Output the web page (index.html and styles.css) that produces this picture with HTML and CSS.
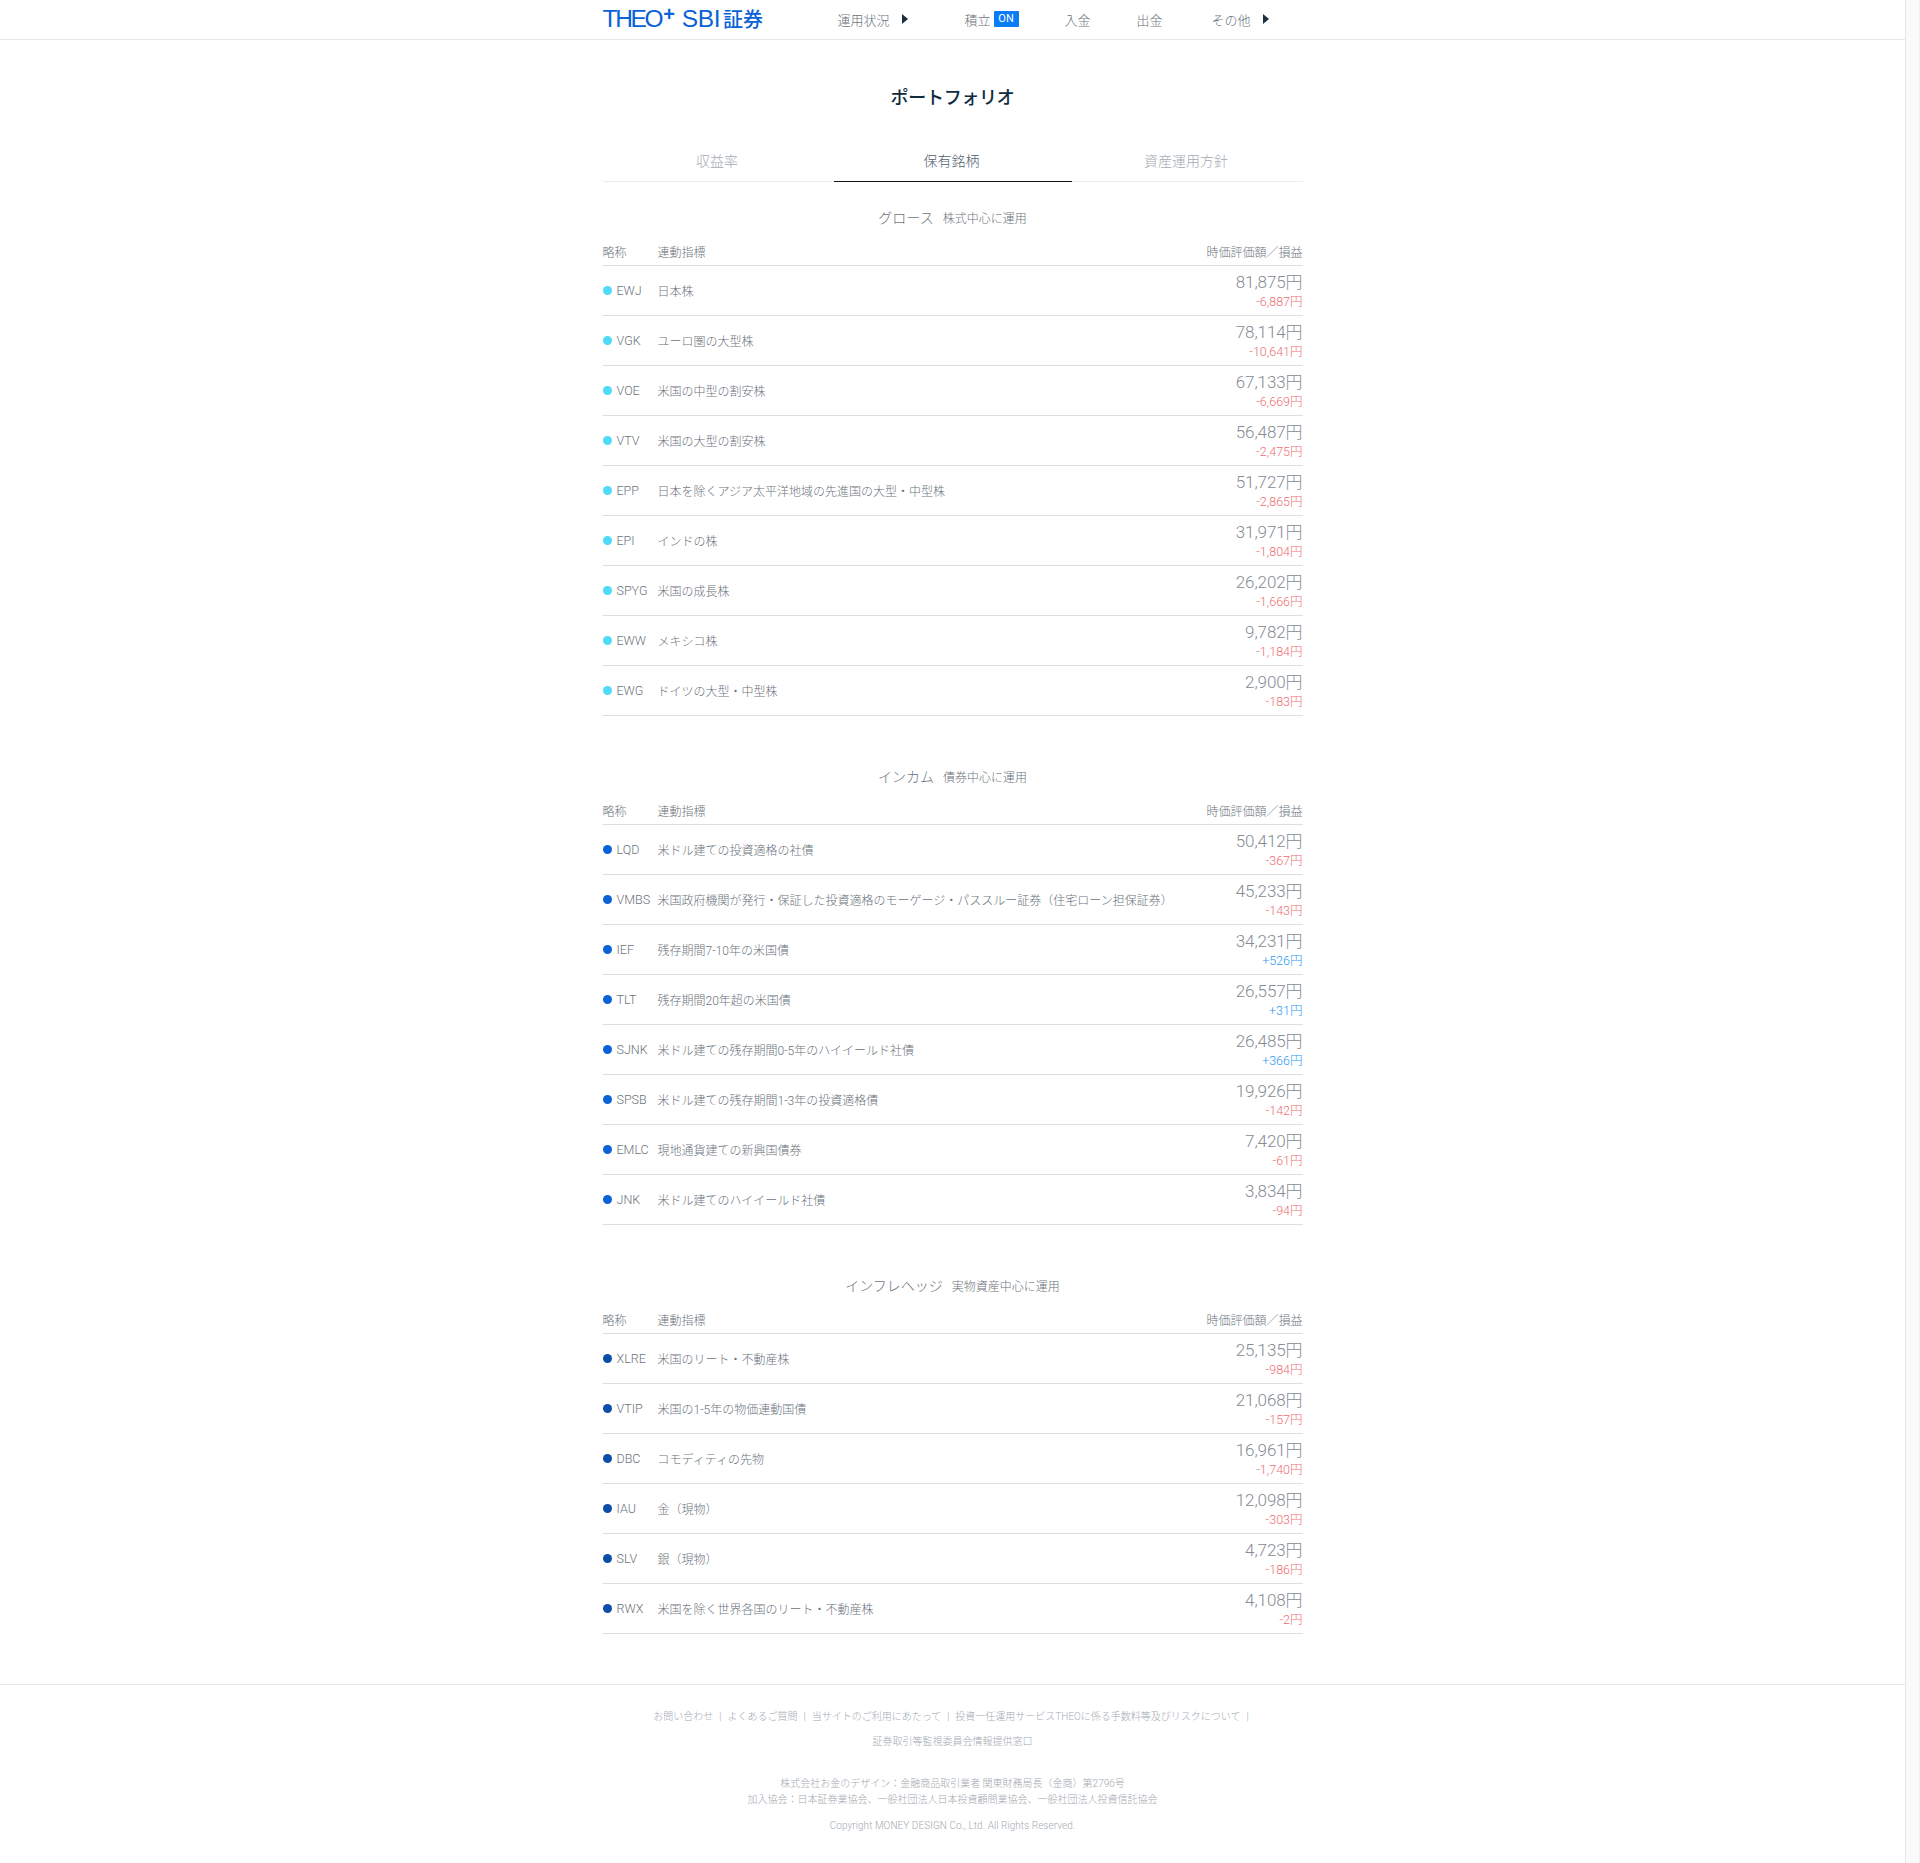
FILE: index.html
```html
<!DOCTYPE html>
<html lang="ja">
<head>
  <meta charset="UTF-8" />
  <title>ポートフォリオ</title>
  <link rel="stylesheet" href="styles.css">
</head>
<body>
<div class="page">
  <header class="site-header">
    <div class="site-header-inner">
      <div class="logo">THEO<sup>+</sup><span class="logo-sbi">SBI</span><span class="logo-ja">証券</span></div>
      <nav class="nav">
        <a class="nav-item nav-status">運用状況<i class="arrow"></i></a>
        <a class="nav-item nav-save">積立<span class="badge">ON</span></a>
        <a class="nav-item nav-in">入金</a>
        <a class="nav-item nav-out">出金</a>
        <a class="nav-item nav-other">その他<i class="arrow"></i></a>
      </nav>
    </div>
  </header>

  <main class="content">
    <h1 class="page-title">ポートフォリオ</h1>

    <div class="tabs">
      <a class="tab">収益率</a>
      <a class="tab active">保有銘柄</a>
      <a class="tab">資産運用方針</a>
    </div>

    <section class="fund growth">
      <h2 class="fund-title">グロース<small>株式中心に運用</small></h2>
      <div class="fund-head"><span class="col-code">略称</span><span class="col-name">連動指標</span><span class="col-value">時価評価額／損益</span></div>
      <div class="row"><i class="dot"></i><span class="col-code">EWJ</span><span class="col-name">日本株</span><div class="col-value"><b>81,875円</b><em class="minus">-6,887円</em></div></div>
      <div class="row"><i class="dot"></i><span class="col-code">VGK</span><span class="col-name">ユーロ圏の大型株</span><div class="col-value"><b>78,114円</b><em class="minus">-10,641円</em></div></div>
      <div class="row"><i class="dot"></i><span class="col-code">VOE</span><span class="col-name">米国の中型の割安株</span><div class="col-value"><b>67,133円</b><em class="minus">-6,669円</em></div></div>
      <div class="row"><i class="dot"></i><span class="col-code">VTV</span><span class="col-name">米国の大型の割安株</span><div class="col-value"><b>56,487円</b><em class="minus">-2,475円</em></div></div>
      <div class="row"><i class="dot"></i><span class="col-code">EPP</span><span class="col-name">日本を除くアジア太平洋地域の先進国の大型・中型株</span><div class="col-value"><b>51,727円</b><em class="minus">-2,865円</em></div></div>
      <div class="row"><i class="dot"></i><span class="col-code">EPI</span><span class="col-name">インドの株</span><div class="col-value"><b>31,971円</b><em class="minus">-1,804円</em></div></div>
      <div class="row"><i class="dot"></i><span class="col-code">SPYG</span><span class="col-name">米国の成長株</span><div class="col-value"><b>26,202円</b><em class="minus">-1,666円</em></div></div>
      <div class="row"><i class="dot"></i><span class="col-code">EWW</span><span class="col-name">メキシコ株</span><div class="col-value"><b>9,782円</b><em class="minus">-1,184円</em></div></div>
      <div class="row"><i class="dot"></i><span class="col-code">EWG</span><span class="col-name">ドイツの大型・中型株</span><div class="col-value"><b>2,900円</b><em class="minus">-183円</em></div></div>
    </section>

    <section class="fund income">
      <h2 class="fund-title">インカム<small>債券中心に運用</small></h2>
      <div class="fund-head"><span class="col-code">略称</span><span class="col-name">連動指標</span><span class="col-value">時価評価額／損益</span></div>
      <div class="row"><i class="dot"></i><span class="col-code">LQD</span><span class="col-name">米ドル建ての投資適格の社債</span><div class="col-value"><b>50,412円</b><em class="minus">-367円</em></div></div>
      <div class="row"><i class="dot"></i><span class="col-code">VMBS</span><span class="col-name">米国政府機関が発行・保証した投資適格のモーゲージ・パススルー証券（住宅ローン担保証券）</span><div class="col-value"><b>45,233円</b><em class="minus">-143円</em></div></div>
      <div class="row"><i class="dot"></i><span class="col-code">IEF</span><span class="col-name">残存期間7-10年の米国債</span><div class="col-value"><b>34,231円</b><em class="plus">+526円</em></div></div>
      <div class="row"><i class="dot"></i><span class="col-code">TLT</span><span class="col-name">残存期間20年超の米国債</span><div class="col-value"><b>26,557円</b><em class="plus">+31円</em></div></div>
      <div class="row"><i class="dot"></i><span class="col-code">SJNK</span><span class="col-name">米ドル建ての残存期間0-5年のハイイールド社債</span><div class="col-value"><b>26,485円</b><em class="plus">+366円</em></div></div>
      <div class="row"><i class="dot"></i><span class="col-code">SPSB</span><span class="col-name">米ドル建ての残存期間1-3年の投資適格債</span><div class="col-value"><b>19,926円</b><em class="minus">-142円</em></div></div>
      <div class="row"><i class="dot"></i><span class="col-code">EMLC</span><span class="col-name">現地通貨建ての新興国債券</span><div class="col-value"><b>7,420円</b><em class="minus">-61円</em></div></div>
      <div class="row"><i class="dot"></i><span class="col-code">JNK</span><span class="col-name">米ドル建てのハイイールド社債</span><div class="col-value"><b>3,834円</b><em class="minus">-94円</em></div></div>
    </section>

    <section class="fund hedge">
      <h2 class="fund-title">インフレヘッジ<small>実物資産中心に運用</small></h2>
      <div class="fund-head"><span class="col-code">略称</span><span class="col-name">連動指標</span><span class="col-value">時価評価額／損益</span></div>
      <div class="row"><i class="dot"></i><span class="col-code">XLRE</span><span class="col-name">米国のリート・不動産株</span><div class="col-value"><b>25,135円</b><em class="minus">-984円</em></div></div>
      <div class="row"><i class="dot"></i><span class="col-code">VTIP</span><span class="col-name">米国の1-5年の物価連動国債</span><div class="col-value"><b>21,068円</b><em class="minus">-157円</em></div></div>
      <div class="row"><i class="dot"></i><span class="col-code">DBC</span><span class="col-name">コモディティの先物</span><div class="col-value"><b>16,961円</b><em class="minus">-1,740円</em></div></div>
      <div class="row"><i class="dot"></i><span class="col-code">IAU</span><span class="col-name">金（現物）</span><div class="col-value"><b>12,098円</b><em class="minus">-303円</em></div></div>
      <div class="row"><i class="dot"></i><span class="col-code">SLV</span><span class="col-name">銀（現物）</span><div class="col-value"><b>4,723円</b><em class="minus">-186円</em></div></div>
      <div class="row"><i class="dot"></i><span class="col-code">RWX</span><span class="col-name">米国を除く世界各国のリート・不動産株</span><div class="col-value"><b>4,108円</b><em class="minus">-2円</em></div></div>
    </section>
  </main>

  <footer class="site-footer">
    <ul class="footer-links">
      <li>お問い合わせ</li>
      <li>よくあるご質問</li>
      <li>当サイトのご利用にあたって</li>
      <li>投資一任運用サービスTHEOに係る手数料等及びリスクについて</li>
    </ul>
    <p class="footer-window">証券取引等監視委員会情報提供窓口</p>
    <p class="footer-company">株式会社お金のデザイン：金融商品取引業者 関東財務局長（金商）第2796号<br>加入協会：日本証券業協会、一般社団法人日本投資顧問業協会、一般社団法人投資信託協会</p>
    <p class="footer-copy">Copyright MONEY DESIGN Co., Ltd. All Rights Reserved.</p>
  </footer>
</div>
<div class="scrollbar"></div>
</body>
</html>
```

FILE: styles.css
```css
:root {
  --text: #6b737c;
  --muted: #a4aab2;
  --navy: #0f2b40;
  --blue: #0a62d6;
  --line: #dedede;
  --line-soft: #e8e8f0;
}
* { box-sizing: border-box; margin: 0; padding: 0; }
body {
  display: flex;
  min-height: 1863px;
  font-family: Roboto, "Noto Sans CJK JP", sans-serif;
  font-weight: 300;
  color: var(--text);
  background: #fff;
}
.page { flex: 1; min-width: 0; }
.scrollbar {
  width: 15px;
  background: #fafafa;
  border-left: 1px solid #e6e6e6;
  border-right: 1px solid #efefef;
}

/* header */
.site-header {
  height: 40px;
  border-bottom: 1px solid var(--line-soft);
}
.site-header-inner {
  width: 700px;
  height: 39px;
  margin: 0 auto;
  display: flex;
  align-items: center;
}
.logo {
  width: 235px;
  font-family: "Liberation Sans", "Noto Sans CJK JP", sans-serif;
  font-weight: 400;
  font-size: 24.5px;
  line-height: 39px;
  letter-spacing: -2.3px;
  color: var(--blue);
  white-space: nowrap;
}
.logo sup {
  font-size: 20px;
  font-weight: 700;
  line-height: 0;
  vertical-align: 6px;
  margin-left: 2px;
}
.logo-sbi { margin-left: 9px; letter-spacing: -0.4px; }
.logo-ja { margin-left: 3px; font-size: 20px; letter-spacing: 0; font-weight: 500; }
.nav { display: flex; align-items: center; margin-top: -1px; }
.nav-item {
  display: flex;
  align-items: center;
  font-size: 13px;
  color: var(--text);
}
.nav-save { margin-left: 57px; }
.nav-in { margin-left: 46px; }
.nav-out { margin-left: 46px; }
.nav-other { margin-left: 49px; }
.arrow {
  width: 0;
  height: 0;
  margin-left: 12px;
  border-left: 6px solid #1c3040;
  border-top: 5.5px solid transparent;
  border-bottom: 5.5px solid transparent;
}
.badge {
  width: 25px;
  height: 16px;
  margin-left: 3px;
  border-radius: 1px;
  background: #0a7cf5;
  color: #fff;
  font-size: 11px;
  font-weight: 400;
  line-height: 16px;
  text-align: center;
}

/* main */
.content { width: 700px; margin: 0 auto; }
.page-title {
  margin-top: 45px;
  font-size: 18px;
  line-height: 26px;
  font-weight: 500;
  letter-spacing: -0.3px;
  color: var(--navy);
  text-align: center;
}
.tabs {
  display: grid;
  grid-template-columns: 1fr 238px 1fr;
  margin-top: 31px;
  border-bottom: 1px solid #ececf0;
}
.tab {
  height: 40px;
  margin-bottom: -1px;
  padding-right: 2px;
  font-size: 14px;
  line-height: 39px;
  text-align: center;
  color: var(--muted);
}
.tab.active {
  color: #536270;
  border-bottom: 1px solid #111;
}

/* fund tables */
.fund + .fund { margin-top: 25px; }
.fund-title {
  padding-top: 24px;
  font-size: 14px;
  line-height: 24px;
  font-weight: 300;
  text-align: center;
}
.fund-title small {
  margin-left: 9px;
  font-size: 12px;
  line-height: 1;
}
.fund-head, .row {
  display: flex;
  border-bottom: 1px solid var(--line);
}
.fund-head {
  height: 36px;
  align-items: flex-end;
  padding-bottom: 3px;
  font-size: 12px;
  line-height: 17px;
}
.fund-head .col-code { width: 55px; }
.fund-head .col-name { flex: 1; }
.row {
  height: 50px;
  align-items: center;
  font-size: 12px;
}
.dot {
  width: 9px;
  height: 9px;
  border-radius: 50%;
  margin-right: 5px;
}
.growth .dot { background: #4fdaf7; }
.income .dot { background: #0a62d6; }
.hedge .dot { background: #0c4da6; }
.row .col-code {
  width: 41px;
  font-size: 12.5px;
  white-space: nowrap;
}
.row .col-name { flex: 1; }
.col-value { text-align: right; }
.col-value b {
  display: block;
  font-size: 17px;
  line-height: 22px;
  font-weight: 300;
  letter-spacing: -0.1px;
  color: #858c94;
}
.col-value em {
  display: block;
  font-size: 12.5px;
  line-height: 18px;
  font-style: normal;
}
.minus { color: #ee6e73; }
.plus { color: #2f98f5; }

/* footer */
.site-footer {
  margin-top: 50px;
  padding: 20px 0 29px;
  border-top: 1px solid var(--line-soft);
  font-size: 10px;
  color: var(--muted);
  text-align: center;
}
.footer-links {
  display: flex;
  justify-content: center;
  padding-left: 3px;
  list-style: none;
  line-height: 24px;
}
.footer-links li::after { content: "|"; margin: 0 6px; }
.footer-window { line-height: 25px; }
.footer-company { margin-top: 22px; line-height: 16px; }
.footer-copy { margin-top: 10px; line-height: 16px; letter-spacing: 0.05px; }
```
